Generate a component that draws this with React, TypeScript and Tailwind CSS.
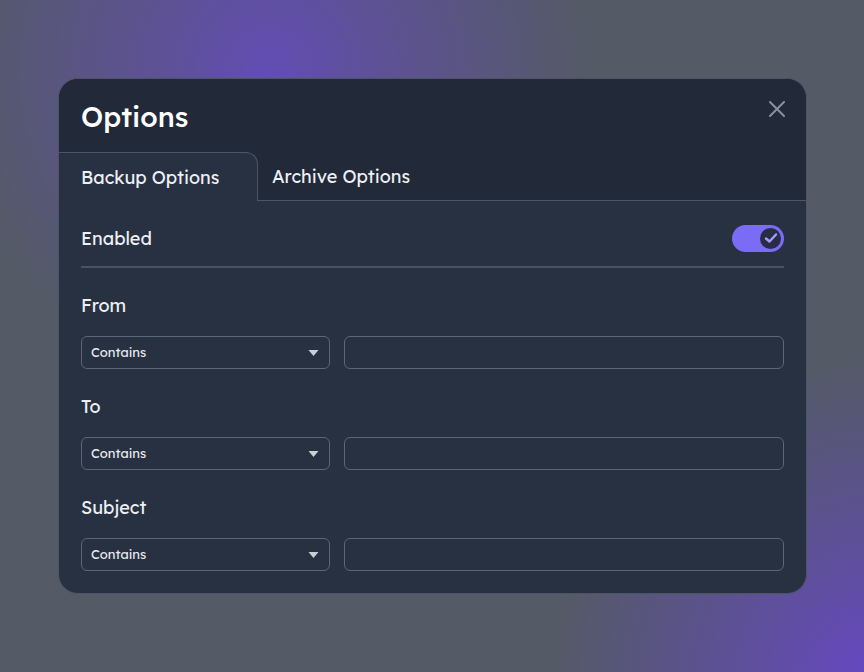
import React from 'react';

const Select = () => (
  <div className="flex h-[33px] w-[249px] shrink-0 items-center justify-between rounded-[6px] border border-[#5d6576] bg-[#283142] pl-[9px] pr-[10px]">
    <span className="text-[13px] text-[#e8ebf0]">Contains</span>
    <svg width="11" height="8" viewBox="0 0 11 8">
      <path d="M0.5 1 L10.5 1 L5.5 7 Z" fill="#c9ced8" />
    </svg>
  </div>
);

const FilterRow = ({ label }: { label: string }) => (
  <div className="flex flex-col">
    <div className="h-[68px] pt-[26px] text-[18px] leading-[24px] text-[#eef0f4]">{label}</div>
    <div className="flex gap-[14px]">
      <Select />
      <div className="h-[33px] flex-1 rounded-[6px] border border-[#5d6576] bg-[#283142]" />
    </div>
  </div>
);

export default function App() {
  return (
    <div
      className="relative h-[672px] w-[864px] overflow-hidden bg-[#545a66]"
      style={{ fontFamily: '"Lexend", "Inter", "Noto Sans", sans-serif' }}
    >
      <div className="absolute inset-0 bg-[radial-gradient(circle_at_270px_70px,#624db4_0px,rgba(98,78,170,0.7)_110px,rgba(84,90,102,0)_320px)]" />
      <div className="absolute inset-0 bg-[radial-gradient(circle_at_880px_690px,#6646c8_0px,rgba(102,72,195,0.65)_110px,rgba(84,90,102,0)_330px)]" />
      <div className="relative pl-[58px] pt-[78px]">
        <div className="w-[749px] overflow-hidden rounded-[20px] border border-[#4c5466] bg-[#283142]">
          <div className="relative bg-[#222938]">
            <div className="px-[22px] pb-[15px] pt-[18px] text-[28px] font-medium leading-[40px] text-white">Options</div>
            <button className="absolute right-[20px] top-[21px] text-[#8a909c]">
              <svg width="18" height="18" viewBox="0 0 18 18" fill="none" stroke="currentColor" strokeWidth="2" strokeLinecap="round">
                <path d="M2 2 L16 16 M16 2 L2 16" />
              </svg>
            </button>
            <div className="flex h-[49px]">
              <div className="flex w-[199px] items-center rounded-tr-[12px] border-r border-t border-[#4c5466] bg-[#283142] pl-[22px] text-[18px] text-[#eef0f4]">
                Backup Options
              </div>
              <div className="flex flex-1 items-center border-b border-[#4c5466] pl-[14px] text-[18px] text-[#eef0f4]">
                Archive Options
              </div>
            </div>
          </div>
          <div className="px-[22px] pb-[22px]">
            <div className="flex h-[67px] items-center justify-between border-b-2 border-[#4a5264] pt-[9px]">
              <span className="text-[18px] text-[#eef0f4]">Enabled</span>
              <div className="flex h-[27px] w-[52px] items-center justify-end rounded-full bg-[#7a6cf5] pr-[1px]">
                <div className="flex h-[25px] w-[25px] items-center justify-center rounded-full border-2 border-[#7a6cf5] bg-[#262d44]">
                  <svg width="14" height="12" viewBox="0 0 14 12" fill="none" stroke="#a79cff" strokeWidth="2.4" strokeLinecap="round" strokeLinejoin="round">
                    <path d="M2 6.5 L5.5 9.5 L12 2.5" />
                  </svg>
                </div>
              </div>
            </div>
            <FilterRow label="From" />
            <FilterRow label="To" />
            <FilterRow label="Subject" />
          </div>
        </div>
      </div>
    </div>
  );
}
